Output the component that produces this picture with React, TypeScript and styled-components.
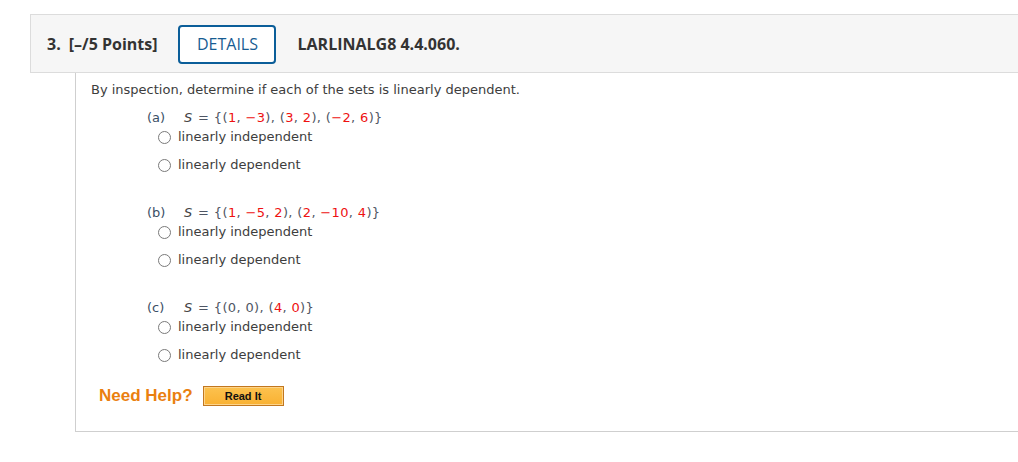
import styled, { createGlobalStyle } from "styled-components";

const GlobalStyle = createGlobalStyle`
  html, body {
    margin: 0;
    padding: 0;
    background: #ffffff;
    overflow: hidden;
  }
  body {
    padding-top: 14px;
  }
`;

const Question = styled.div`
  margin-left: 30px;
  width: 1010px;
`;

const Header = styled.div`
  height: 57px;
  display: flex;
  align-items: center;
  padding-left: 16px;
  background: #f6f6f6;
  border: 1px solid #dcdcdc;
  font-family: "Open Sans", sans-serif;
  font-size: 16px;
  font-weight: 700;
  color: #333333;
`;

const Number = styled.span`
  margin-right: 8px;
`;

const DetailsButton = styled.button`
  width: 98px;
  height: 39px;
  margin: 1px 21px 0 21px;
  border: 2px solid #0b5e99;
  border-radius: 4px;
  background: #ffffff;
  color: #175c92;
  font-family: "Open Sans", sans-serif;
  font-size: 16px;
  font-weight: 400;
  padding: 0;
`;

const Body = styled.div`
  margin-left: 45px;
  border-left: 1px solid #cfcfcf;
  border-bottom: 1px solid #cfcfcf;
  padding: 8px 0 25px 15px;
  font-family: "DejaVu Sans", Verdana, sans-serif;
  font-size: 13px;
  line-height: 18px;
  color: #3d3d3d;
`;

const Intro = styled.div``;

const Part = styled.div<{ $first?: boolean }>`
  margin-top: ${(p) => (p.$first ? "10px" : "30px")};
  padding-left: 56px;
`;

const PartLabel = styled.div`
  display: flex;
  color: #3a4f66;
`;

const Letter = styled.span`
  width: 37px;
`;

const Math = styled.span`
  color: #4f5664;
  letter-spacing: 0.35px;
`;

const Var = styled.i`
  color: #444444;
  margin-right: 1px;
`;

const Num = styled.span`
  color: #ee1111;
`;

const Option = styled.label<{ $first?: boolean }>`
  display: flex;
  align-items: center;
  gap: 7px;
  margin-top: ${(p) => (p.$first ? "1px" : "10px")};
  padding-left: 11px;
  color: #3d3d3d;
`;

const Radio = styled.span`
  width: 11px;
  height: 11px;
  border: 1px solid #7a7a7a;
  border-radius: 50%;
  background: #ffffff;
`;

const HelpRow = styled.div`
  display: flex;
  align-items: center;
  gap: 10px;
  margin-top: 22px;
  padding-left: 8px;
`;

const NeedHelp = styled.span`
  font-family: "Liberation Sans", Arial, sans-serif;
  font-size: 17px;
  font-weight: 700;
  color: #ea7f10;
`;

const ReadIt = styled.button`
  width: 81px;
  height: 20px;
  padding: 0;
  border: 1px solid #c2771f;
  box-shadow: inset 0 0 0 1px #fdd48a;
  background: linear-gradient(#fcc24f, #f9b132);
  font-family: "Liberation Sans", Arial, sans-serif;
  font-size: 11px;
  font-weight: 700;
  color: #111111;
`;

type Tuple = number[];

const neg = (n: number) => (n < 0 ? `\u2212${-n}` : `${n}`);

const SetExpr = ({ tuples }: { tuples: Tuple[] }) => (
  <Math>
    <Var>S</Var> = {"{"}
    {tuples.map((t, i) => (
      <span key={i}>
        (
        {t.map((n, j) => (
          <span key={j}>
            <Num>{neg(n)}</Num>
            {j < t.length - 1 ? ", " : ""}
          </span>
        ))}
        ){i < tuples.length - 1 ? ", " : ""}
      </span>
    ))}
    {"}"}
  </Math>
);

const parts: { letter: string; tuples: Tuple[]; zeroBlack?: boolean }[] = [
  { letter: "(a)", tuples: [[1, -3], [3, 2], [-2, 6]] },
  { letter: "(b)", tuples: [[1, -5, 2], [2, -10, 4]] },
  { letter: "(c)", tuples: [[0, 0], [4, 0]], zeroBlack: true },
];

function App() {
  return (
    <>
      <GlobalStyle />
      <Question>
        <Header>
          <Number>3.</Number>
          <span>[–/5 Points]</span>
          <DetailsButton>DETAILS</DetailsButton>
          <span>LARLINALG8 4.4.060.</span>
        </Header>
        <Body>
          <Intro>By inspection, determine if each of the sets is linearly dependent.</Intro>
          {parts.map((p, i) => (
            <Part key={p.letter} $first={i === 0}>
              <PartLabel>
                <Letter>{p.letter}</Letter>
                {p.zeroBlack ? (
                  <Math>
                    <Var>S</Var> = {"{(0, 0), ("}
                    <Num>4</Num>, <Num>0</Num>
                    {")}"}
                  </Math>
                ) : (
                  <SetExpr tuples={p.tuples} />
                )}
              </PartLabel>
              <Option $first>
                <Radio />
                linearly independent
              </Option>
              <Option>
                <Radio />
                linearly dependent
              </Option>
            </Part>
          ))}
          <HelpRow>
            <NeedHelp>Need Help?</NeedHelp>
            <ReadIt>Read It</ReadIt>
          </HelpRow>
        </Body>
      </Question>
    </>
  );
}

export default App;
